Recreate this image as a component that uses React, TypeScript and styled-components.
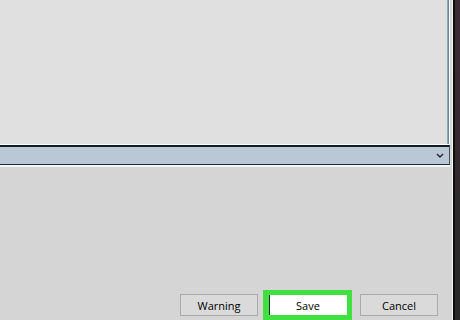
import React from "react";
import styled, { createGlobalStyle } from "styled-components";

const Global = createGlobalStyle`
  html, body { margin: 0; padding: 0; width: 460px; height: 320px; overflow: hidden; background: #d6d6d6; }
  #root { width: 460px; height: 320px; }
`;

const Screen = styled.div`
  display: flex;
  width: 460px;
  height: 320px;
  font-family: "Open Sans", "Noto Sans", sans-serif;
`;

const Main = styled.div`
  display: flex;
  flex-direction: column;
  width: 452px;
  height: 320px;
  background: #d6d6d6;
`;

const EdgeStrip = styled.div`
  width: 8px;
  height: 320px;
  display: flex;
`;

const EdgeHighlight = styled.div`
  width: 1px;
  background: #f4f4f4;
`;

const EdgeLine = styled.div`
  width: 2px;
  background: #0d0d0d;
`;

const EdgeBody = styled.div`
  flex: 1;
  background: linear-gradient(#3b2c33 0%, #36292f 40%, #2c2a2b 70%, #2a2a2a 100%);
`;

const Panel = styled.div`
  height: 144px;
  margin-right: 2px;
  background: #e0e0e0;
  border-right: 1px solid #f6f8fa;
  display: flex;
`;

const PanelFill = styled.div`
  flex: 1;
  background: #e0e0e0;
`;

const PanelBorder = styled.div`
  width: 2px;
  background: linear-gradient(90deg, #9fb7c4, #5c7888);
`;

const PanelBottom = styled.div`
  height: 1px;
  margin-right: 2px;
  background: #fafcfd;
`;

const Dropdown = styled.div`
  height: 17px;
  margin-right: 2px;
  background: #b9c8d4;
  border-top: 2px solid #121c26;
  border-bottom: 1px solid #1c2c38;
  border-right: 1px solid #3f5666;
  display: flex;
  align-items: center;
  justify-content: flex-end;
  padding-right: 5px;
`;

const DropBottom = styled.div`
  height: 2px;
  margin-right: 2px;
  background: #f2f6f8;
`;

const Footer = styled.div`
  flex: 1;
  display: flex;
  align-items: flex-end;
  justify-content: flex-end;
  padding-right: 14px;
  background: #d5d5d5;
`;

const ButtonRow = styled.div`
  display: flex;
  align-items: center;
  height: 30px;
`;

const Button = styled.div`
  box-sizing: border-box;
  width: 78px;
  height: 22px;
  background: #dadada;
  border: 1px solid #a9a9a9;
  display: flex;
  align-items: center;
  justify-content: center;
  font-size: 11px;
  color: #000;
`;

const Highlight = styled.div<{ $ml: number; $mr: number }>`
  box-sizing: border-box;
  width: 89px;
  height: 30px;
  margin-left: ${(p) => p.$ml}px;
  margin-right: ${(p) => p.$mr}px;
  background: #3fe03f;
  padding: 5px 5px 5px 6px;
  display: flex;
`;

const SaveButton = styled.div`
  flex: 1;
  box-sizing: border-box;
  background: #ffffff;
  border-left: 1px solid #1c2a36;
  display: flex;
  align-items: center;
  justify-content: center;
  font-size: 11px;
  color: #000;
  padding-right: 1px;
`;

const Chevron = () => (
  <svg width="8" height="5" viewBox="0 0 8 5">
    <path d="M1 1 L4 4 L7 1" fill="none" stroke="#1a2530" strokeWidth="1.4" />
  </svg>
);

export default function App() {
  return (
    <Screen>
      <Global />
      <Main>
        <Panel>
          <PanelFill />
          <PanelBorder />
        </Panel>
        <PanelBottom />
        <Dropdown>
          <Chevron />
        </Dropdown>
        <DropBottom />
        <Footer>
          <ButtonRow>
            <Button>Warning</Button>
            <Highlight $ml={5} $mr={8}>
              <SaveButton>Save</SaveButton>
            </Highlight>
            <Button>Cancel</Button>
          </ButtonRow>
        </Footer>
      </Main>
      <EdgeStrip>
        <EdgeHighlight />
        <EdgeLine />
        <EdgeBody />
      </EdgeStrip>
    </Screen>
  );
}
